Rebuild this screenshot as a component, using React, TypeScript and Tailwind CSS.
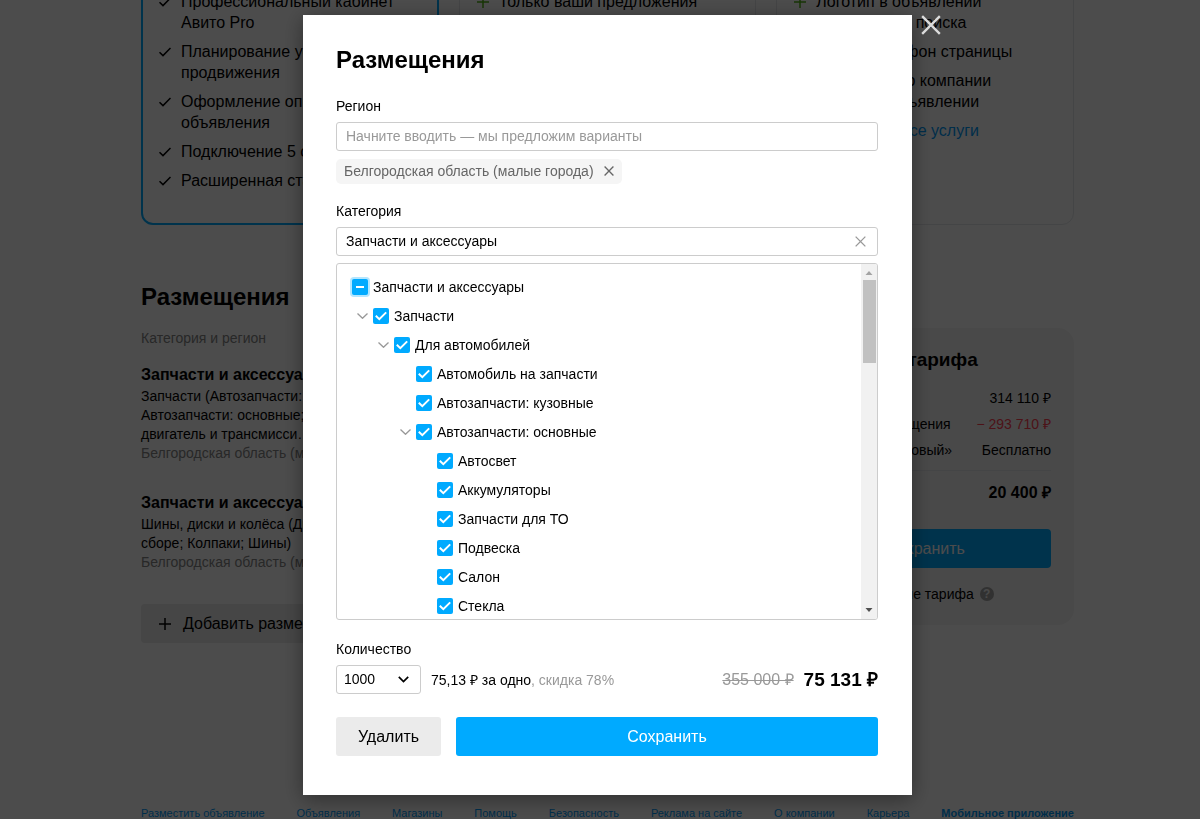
import React from 'react'

const tree = [
    { label: 'Запчасти и аксессуары', level: 0, partial: true },
    { label: 'Запчасти', level: 1, open: true },
    { label: 'Для автомобилей', level: 2, open: true },
    { label: 'Автомобиль на запчасти', level: 3 },
    { label: 'Автозапчасти: кузовные', level: 3 },
    { label: 'Автозапчасти: основные', level: 3, open: true },
    { label: 'Автосвет', level: 4 },
    { label: 'Аккумуляторы', level: 4 },
    { label: 'Запчасти для ТО', level: 4 },
    { label: 'Подвеска', level: 4 },
    { label: 'Салон', level: 4 },
    { label: 'Стекла', level: 4 }
]

const indents = ['pl-[15px]', 'pl-[15px]', 'pl-[36px]', 'pl-[58px]', 'pl-[79px]']

const proFeatures = [
    ['Профессиональный кабинет', 'Авито Pro'],
    ['Планирование услуг', 'продвижения'],
    ['Оформление описания', 'объявления'],
    ['Подключение 5 сотрудников'],
    ['Расширенная статистика']
]

const brandFeatures = [
    ['Логотип в объявлении', 'и в разделах поиска'],
    ['Рекламный фон страницы'],
    ['Материалы о компании', 'в каждом объявлении']
]

const placements = [
    {
        lines: ['Запчасти (Автозапчасти: кузовные;', 'Автозапчасти: основные; Автосвет;', 'двигатель и трансмисси…'],
        region: 'Белгородская область (малые города)'
    },
    {
        lines: ['Шины, диски и колёса (Диски; Колёса в', 'сборе; Колпаки; Шины)'],
        region: 'Белгородская область (малые города)'
    }
]

const footerLinks = [
    'Разместить объявление',
    'Объявления',
    'Магазины',
    'Помощь',
    'Безопасность',
    'Реклама на сайте',
    'О компании',
    'Карьера'
]

function Cross({ className, width = 1.5 }: { className: string; width?: number }) {
    return (
        <svg viewBox="0 0 12 12" className={className} fill="none" stroke="currentColor" strokeWidth={width} aria-hidden="true">
            <path d="M0.7 0.7L11.3 11.3M11.3 0.7L0.7 11.3" />
        </svg>
    )
}

function Plus({ className }: { className: string }) {
    return (
        <svg viewBox="0 0 12 12" className={className} fill="none" stroke="currentColor" strokeWidth="1.5" aria-hidden="true">
            <path d="M6 0V12M0 6H12" />
        </svg>
    )
}

function Feature({ lines, icon }: { lines: string[]; icon: React.ReactNode }) {
    return (
        <li className="flex">
            <span className="flex h-[21px] w-[22px] shrink-0 items-center">{icon}</span>
            <span className="whitespace-nowrap">
                {lines.map((line) => (
                    <span key={line} className="block">{line}</span>
                ))}
            </span>
        </li>
    )
}

function Page() {
    return (
        <div className="mx-auto -mt-10 w-full max-w-[933px]">
            <div className="grid grid-cols-3 gap-5 text-base leading-[21px]">
                <div className="rounded-xl border-2 border-[#00aaff] pt-[29px] pb-8 pl-4">
                    <ul className="space-y-2">
                        {proFeatures.map((lines) => (
                            <Feature
                                key={lines[0]}
                                lines={lines}
                                icon={
                                    <svg viewBox="0 0 12 10" className="h-[10px] w-3" fill="none" stroke="currentColor" strokeWidth="1.5" aria-hidden="true">
                                        <path d="M0.5 5.2L4 8.6L11.5 1" />
                                    </svg>
                                }
                            />
                        ))}
                    </ul>
                </div>
                <div className="rounded-xl border border-gray-200 pt-[30px] pl-[17px]">
                    <ul>
                        <Feature lines={['Только ваши предложения']} icon={<Plus className="size-3 text-[#50b414]" />} />
                    </ul>
                </div>
                <div className="rounded-xl border border-gray-200 pt-[30px] pl-[17px]">
                    <ul className="space-y-2">
                        {brandFeatures.map((lines) => (
                            <Feature
                                key={lines[0]}
                                lines={lines}
                                icon={<Plus className="size-3 text-[#50b414]" />}
                            />
                        ))}
                    </ul>
                    <a href="#services" className="mt-2 block pl-[22px] text-[#0099f7]">Подобрать все услуги</a>
                </div>
            </div>

            <h2 className="mt-14 text-2xl leading-8 font-bold">Размещения</h2>

            <div className="mt-[15px] grid grid-cols-3 gap-5">
                <div className="col-span-2 text-sm">
                    <p className="leading-5 text-[#858585]">Категория и регион</p>
                    <div className="mt-[17px] space-y-[30px]">
                        {placements.map((item) => (
                            <div key={item.lines[0]}>
                                <h3 className="mb-0.5 text-base leading-5 font-bold">Запчасти и аксессуары</h3>
                                {item.lines.map((line) => (
                                    <p key={line} className="leading-[19px]">{line}</p>
                                ))}
                                <p className="leading-[19px] text-[#858585]">{item.region}</p>
                            </div>
                        ))}
                    </div>
                    <button type="button" className="mt-8 flex h-[39px] items-center rounded bg-[#ebebeb] px-[18px] text-base">
                        <Plus className="mr-3 size-3" />
                        Добавить размещение
                    </button>
                </div>

                <aside className="self-start rounded-2xl bg-[#f5f5f5] px-[23px] pt-5 pb-[21px] text-sm leading-5">
                    <h3 className="text-[19px] leading-6 font-bold">Стоимость тарифа</h3>
                    <dl className="mt-4 space-y-1.5 whitespace-nowrap">
                        <div className="flex justify-between">
                            <dt>Размещения</dt>
                            <dd>314 110 ₽</dd>
                        </div>
                        <div className="flex justify-between">
                            <dt>Скидка на размещения</dt>
                            <dd className="text-[#ff4053]">− 293 710 ₽</dd>
                        </div>
                        <div className="flex justify-between">
                            <dt>Подписка «Стартовый»</dt>
                            <dd>Бесплатно</dd>
                        </div>
                    </dl>
                    <div className="mt-2.5 flex justify-between border-t border-gray-200 pt-3 text-base leading-5 font-bold">
                        <span>Итого</span>
                        <span>20 400 ₽</span>
                    </div>
                    <button type="button" className="mt-[26px] h-[39px] w-full rounded bg-[#00aaff] text-base text-white">Сохранить</button>
                    <p className="mt-4 flex items-center justify-center gap-1.5">
                        Описание тарифа
                        <span className="flex size-3.5 items-center justify-center rounded-full bg-[#a3a3a3] text-xs font-bold text-[#f5f5f5]">?</span>
                    </p>
                </aside>
            </div>

            <footer className="mt-[162px] flex justify-between text-[11px] leading-4 whitespace-nowrap text-[#0099f7]">
                {footerLinks.map((link) => (
                    <a key={link} href="#footer">{link}</a>
                ))}
                <a href="#mobile" className="font-bold">Мобильное приложение</a>
            </footer>
        </div>
    )
}

function TreeRow({ label, level, partial, open }: { label: string; level: number; partial?: boolean; open?: boolean }) {
    return (
        <li className={`flex h-[29px] items-center ${indents[level]}`}>
            {level > 0 && (
                <span className="flex w-[21px] justify-center">
                    {open && (
                        <button type="button" aria-label={label} className="text-[#999999]">
                            <svg viewBox="0 0 11 6" className="h-1.5 w-[11px]" fill="none" stroke="currentColor" strokeWidth="1.3" aria-hidden="true">
                                <path d="M0.5 0.5L5.5 5.3L10.5 0.5" />
                            </svg>
                        </button>
                    )}
                </span>
            )}
            <label className="flex items-center gap-[5px]">
                <span className="relative flex size-4">
                    <input
                        type="checkbox"
                        defaultChecked
                        className={`size-4 appearance-none rounded-[2px] bg-[#00aaff] ${partial ? 'ring-2 ring-[#b3e6ff]' : ''}`}
                    />
                    <svg viewBox="0 0 16 16" className="pointer-events-none absolute inset-0 size-4" fill="none" stroke="white" strokeWidth="2" aria-hidden="true">
                        <path d={partial ? 'M4 8H12' : 'M2.8 7.8L6.3 11.2L13.2 4.4'} />
                    </svg>
                </span>
                {label}
            </label>
        </li>
    )
}

function PlacementDialog() {
    return (
        <div role="dialog" aria-labelledby="dialog-title" className="relative w-full max-w-[609px] self-start bg-white pt-[29px] pr-[34px] pb-[39px] pl-[33px] text-sm leading-5 shadow-[0_4px_20px_rgba(0,0,0,0.4)]">
            <button type="button" aria-label="Закрыть" className="absolute top-0 left-full ml-[9px] text-[#dbdbdb]">
                <Cross className="size-5" width={1.4} />
            </button>

            <h1 id="dialog-title" className="text-2xl leading-8 font-bold">Размещения</h1>

            <label htmlFor="region" className="mt-5 block">Регион</label>
            <input
                id="region"
                type="text"
                placeholder="Начните вводить — мы предложим варианты"
                className="mt-1.5 block h-[29px] w-full rounded-[3px] border border-[#cccccc] px-[9px] pb-px placeholder:text-[#999999]"
            />
            <div className="mt-2 flex h-[25px] w-fit items-center gap-2.5 rounded-[5px] bg-[#f5f5f5] px-2 pb-px text-[#666666]">
                Белгородская область (малые города)
                <button type="button" aria-label="Удалить регион">
                    <Cross className="size-2.5" width={1.6} />
                </button>
            </div>

            <label htmlFor="category" className="mt-[17px] block">Категория</label>
            <div className="mt-1.5 flex h-[29px] items-center rounded-[3px] border border-[#cccccc] pr-[11px] pb-px pl-[9px]">
                <input id="category" type="text" defaultValue="Запчасти и аксессуары" className="min-w-0 flex-1 outline-none" />
                <button type="button" aria-label="Очистить" className="text-[#999999]">
                    <Cross className="size-[11px]" width={1.4} />
                </button>
            </div>

            <div className="mt-[7px] flex h-[357px] overflow-hidden rounded-[3px] border border-[#cccccc]">
                <ul className="flex-1 pt-2">
                    {tree.map((row) => (
                        <TreeRow key={row.label} {...row} />
                    ))}
                </ul>
                <div className="flex w-4 flex-col items-center bg-[#f1f1f1]" aria-hidden="true">
                    <svg viewBox="0 0 16 16" className="size-4 text-[#a3a3a3]" fill="currentColor">
                        <path d="M4.5 11L8 7L11.5 11Z" />
                    </svg>
                    <div className="h-[83px] w-[13px] bg-[#c1c1c1]" />
                    <svg viewBox="0 0 16 16" className="mt-auto size-4 text-[#505050]" fill="currentColor">
                        <path d="M4.5 5L8 9L11.5 5Z" />
                    </svg>
                </div>
            </div>

            <label htmlFor="amount" className="mt-[19px] block">Количество</label>
            <div className="mt-1.5 flex items-center">
                <div className="relative">
                    <select id="amount" defaultValue="1000" className="block h-[29px] w-[85px] appearance-none rounded-[3px] border border-[#cccccc] px-[7px] pb-px">
                        <option>1000</option>
                    </select>
                    <svg viewBox="0 0 11 7" className="pointer-events-none absolute top-[11px] right-3 h-[7px] w-[11px]" fill="none" stroke="black" strokeWidth="1.7" aria-hidden="true">
                        <path d="M0.8 0.8L5.5 5.5L10.2 0.8" />
                    </svg>
                </div>
                <p className="ml-2.5">75,13 ₽ за одно<span className="text-[#999999]">, скидка 78%</span></p>
                <s className="ml-auto text-base text-[#999999]">355 000 ₽</s>
                <strong className="ml-2.5 text-[19px] leading-6">75 131 ₽</strong>
            </div>

            <div className="mt-[23px] flex gap-[15px] text-base">
                <button type="button" className="h-[39px] w-[105px] rounded-[3px] bg-[#ebebeb]">Удалить</button>
                <button type="button" className="h-[39px] flex-1 rounded-[3px] bg-[#00aaff] text-white">Сохранить</button>
            </div>
        </div>
    )
}

export default function App() {
    return (
        <div className="h-screen overflow-hidden bg-white pl-[15px] font-['Liberation_Sans',Arial,sans-serif] text-black">
            <Page />
            <div className="fixed inset-0 flex justify-center bg-black/70 pt-[15px] pl-[15px]">
                <PlacementDialog />
            </div>
        </div>
    )
}
